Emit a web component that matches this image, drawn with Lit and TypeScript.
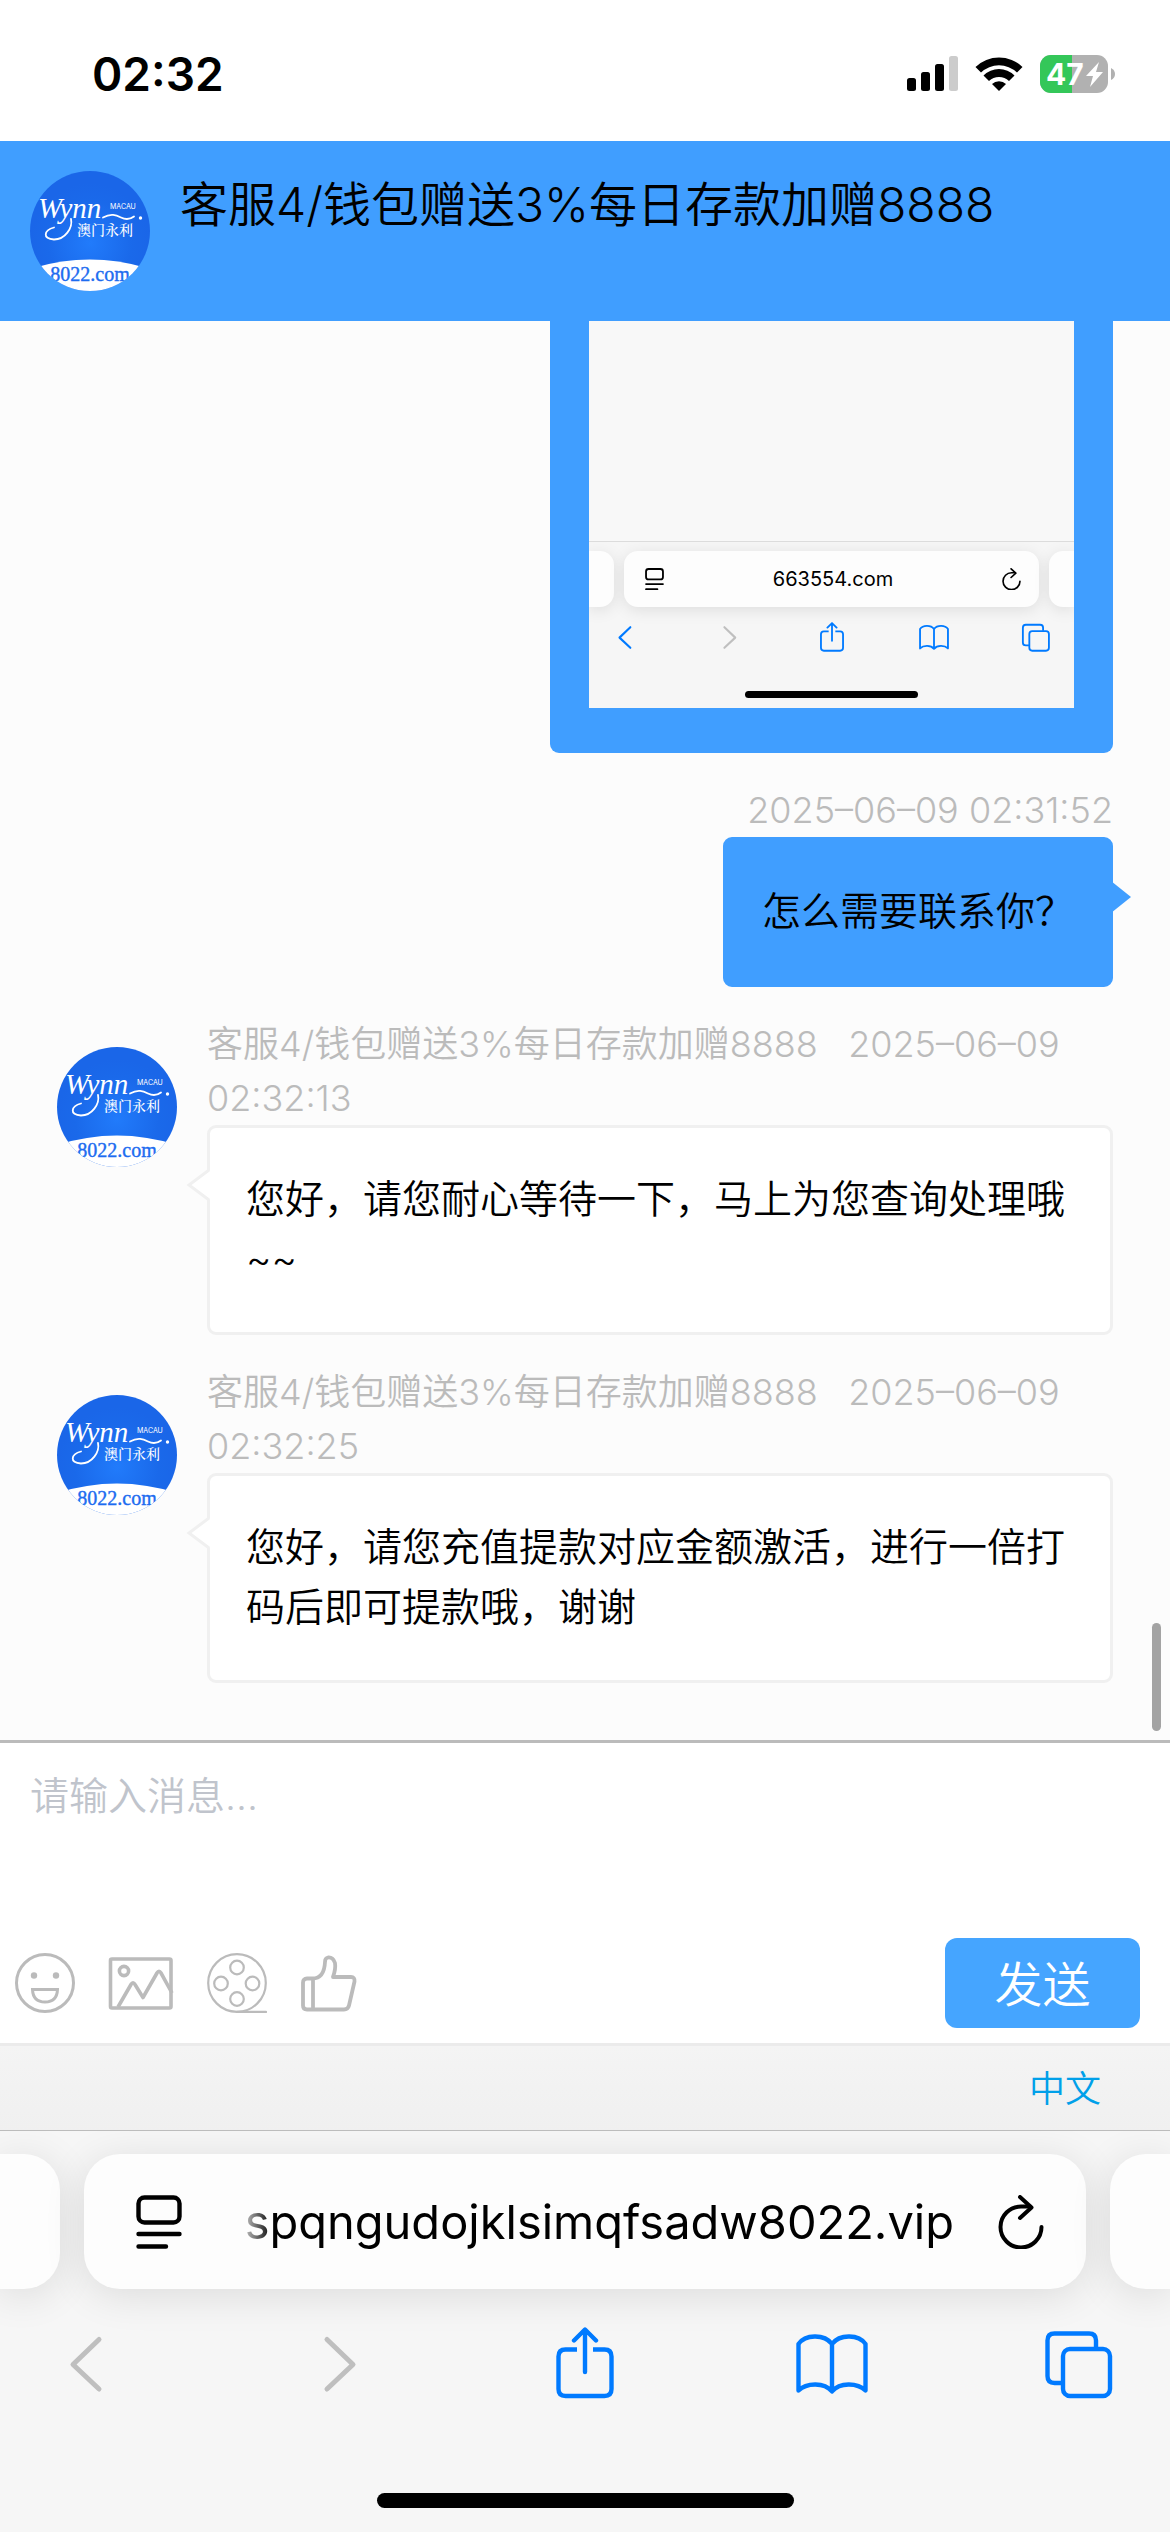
import { LitElement, html, css, svg, nothing } from "lit";
import { customElement, property } from "lit/decorators.js";

const NAME = "客服4/钱包赠送3%每日存款加赠8888";

/* ---------- icons ---------- */

const readerIcon = html`<svg viewBox="0 0 46 54" fill="none" stroke="currentColor" stroke-width="4.4" stroke-linecap="round">
  <rect x="2.5" y="2.5" width="41" height="25" rx="6"></rect>
  <path d="M2.5 39H43.5M2.5 51.5H30"></path>
</svg>`;

const reloadIcon = html`<svg viewBox="0 0 46 54" fill="none" stroke="currentColor" stroke-width="4" stroke-linecap="round" stroke-linejoin="round">
  <path d="M43.5 32A20.5 20.5 0 1 1 23 11.500H32"></path>
  <path d="M22 2L33.500 12.500L22 23"></path>
</svg>`;

const backIcon = html`<svg viewBox="0 0 72 72" fill="none" stroke="currentColor" stroke-width="5" stroke-linecap="round" stroke-linejoin="round">
  <path d="M44 12.500L18 37.500L44 62"></path>
</svg>`;

const forwardIcon = html`<svg viewBox="0 0 72 72" fill="none" stroke="currentColor" stroke-width="5" stroke-linecap="round" stroke-linejoin="round">
  <path d="M25 12.500L51 37.500L25 62"></path>
</svg>`;

const shareIcon = html`<svg viewBox="0 0 72 72" fill="none" stroke="currentColor" stroke-width="4.400" stroke-linecap="round" stroke-linejoin="round">
  <path stroke-linecap="butt" d="M28 22.500H16.500Q9.500 22.500 9.500 29.500V62Q9.500 69 16.500 69H55.500Q62.500 69 62.500 62V29.500Q62.500 22.500 55.500 22.500H44"></path>
  <path d="M36 45V3M25 13.500L36 2.500L47 13.500"></path>
</svg>`;

const bookIcon = html`<svg viewBox="0 0 72 72" fill="none" stroke="currentColor" stroke-width="4.400" stroke-linejoin="round">
  <path d="M36 17C28 6.500 9 7.500 2.500 17V63.500C10 56 28 54.500 36 64.500C44 54.500 62 56 69.500 63.500V17C63 7.500 44 6.500 36 17ZM36 17V64"></path>
</svg>`;

const tabsIcon = html`<svg viewBox="0 0 72 72" fill="none" stroke="currentColor" stroke-width="4.400" stroke-linejoin="round">
  <rect x="20" y="22" width="47" height="47" rx="7"></rect>
  <path d="M53 21V13.500Q53 6.500 46 6.500H11.500Q4.500 6.500 4.500 13.500V49Q4.500 56 11.500 56H19"></path>
</svg>`;

const smileIcon = html`<svg class="tool" viewBox="0 0 60 60" fill="none" stroke="currentColor" stroke-width="3">
  <circle cx="30" cy="30" r="28.500"></circle>
  <circle cx="19" cy="22.500" r="3.200" fill="currentColor" stroke="none"></circle>
  <circle cx="41" cy="22.500" r="3.200" fill="currentColor" stroke="none"></circle>
  <path d="M17.500 36.500H42.500Q42 49 30 49Q18 49 17.500 36.500Z"></path>
</svg>`;

const imageIcon = html`<svg class="tool wide" viewBox="0 0 66 60" fill="none" stroke="currentColor" stroke-width="3.600" stroke-linejoin="round">
  <rect x="2.500" y="6" width="60.500" height="49" rx="1.500"></rect>
  <circle cx="16" cy="18" r="4.600"></circle>
  <path d="M10 54L23 31.500Q25 28 27 31.500L35 44.500L49 20Q51 16.500 53 20L64 40"></path>
</svg>`;

const filmIcon = html`<svg class="tool" viewBox="0 0 60 60" fill="none" stroke="currentColor" stroke-width="2.200">
  <circle cx="30" cy="30" r="28.800"></circle>
  <circle cx="30" cy="14.500" r="6.800"></circle>
  <circle cx="14" cy="30.500" r="6.800"></circle>
  <circle cx="45.500" cy="30.500" r="6.800"></circle>
  <circle cx="30" cy="46" r="6.800"></circle>
  <path stroke-linecap="round" d="M30 58.900H59"></path>
</svg>`;

const thumbIcon = html`<svg class="tool" viewBox="0 0 60 60" fill="none" stroke="currentColor" stroke-width="3.800" stroke-linejoin="round">
  <path d="M12.500 25.500H7Q3 25.500 3 29.500V52.500Q3 56.500 7 56.500H44Q48 56.500 49 52.500L54.500 28.500Q55 24 51 24H33C35.500 17 35.500 13 35 10Q33 4 28 4.500Q25 5 25 9C24.500 20 20 25.500 12.500 25.500Z"></path>
  <path d="M13 26V56"></path>
</svg>`;

/* ---------- brand avatar ---------- */

@customElement("brand-avatar")
export class BrandAvatar extends LitElement {
  static styles = css`
    :host {
      display: block;
      flex: none;
      width: 120px;
      height: 120px;
      border-radius: 50%;
      overflow: hidden;
    }
    svg {
      display: block;
      width: 100%;
      height: 100%;
    }
    .script {
      font: italic 29px "Liberation Serif", serif;
      fill: #fff;
    }
    .place {
      font: 7px Inter, sans-serif;
      fill: #fff;
    }
    .cn {
      font: 500 14px "Noto Serif CJK SC", "Noto Sans CJK SC", serif;
      fill: #fff;
    }
    .site {
      font: 20px "Liberation Serif", serif;
      fill: #1d6cf0;
      stroke: #1d6cf0;
      stroke-width: 0.4px;
      text-anchor: middle;
    }
  `;

  render() {
    return html`<svg viewBox="0 0 120 120" role="img" aria-label="Wynn Macau">
      <defs>
        <radialGradient id="glow" cx="50%" cy="60%" r="50%">
          <stop offset="0" stop-color="#217bfb"></stop>
          <stop offset="0.700" stop-color="#1a69ea"></stop>
          <stop offset="1" stop-color="#1a66e8"></stop>
        </radialGradient>
      </defs>
      <rect width="120" height="120" fill="url(#glow)"></rect>
      <text class="script" x="8" y="47">Wynn</text>
      <g fill="none" stroke="#fff" stroke-width="1.800" stroke-linecap="round">
        <path d="M41 48C43 57 35 68.500 24 68.500C12 68 14 59 24 56.500"></path>
        <path d="M73 46.500C81 42 86 44 91 46.500S100 48.500 104 45.500"></path>
      </g>
      <circle cx="110.500" cy="47" r="1.700" fill="#fff"></circle>
      <text class="place" x="80" y="38">MACAU</text>
      <text class="cn" x="47" y="64">澳门永利</text>
      <path d="M0 98Q60 79 120 98V120H0Z" fill="#fff"></path>
      <text class="site" x="60" y="110">8022.com</text>
    </svg>`;
  }
}

/* ---------- browser chrome (full size and thumbnail) ---------- */

@customElement("browser-bar")
export class BrowserBar extends LitElement {
  @property() address = "";
  @property({ type: Boolean }) mini = false;
  @property({ type: Boolean }) canGoBack = false;

  static styles = css`
    :host {
      display: block;
      font-family: Inter, "Noto Sans CJK SC", sans-serif;
      background: #f6f6f6;
      border-top: 1px solid #bcbcbc;
      overflow: hidden;
      --side: 60px;
      --bar: 135px;
      --gap: 24px;
      --round: 36px;
      --icon: 72px;
      --glyph: 46px;
    }
    :host([mini]) {
      border-top-color: #dcdcdc;
      --side: 25px;
      --bar: 56px;
      --gap: 10px;
      --round: 14px;
      --icon: 30px;
      --glyph: 19px;
    }
    * {
      box-sizing: border-box;
    }
    svg {
      display: block;
      width: 100%;
      height: 100%;
    }
    button {
      padding: 0;
      border: 0;
      background: none;
      color: #007aff;
    }
    button:disabled {
      color: #bfbfbf;
    }
    .addresses {
      display: flex;
      gap: var(--gap);
      padding-top: 23px;
    }
    .card {
      height: var(--bar);
      background: #fdfdfd;
      border-radius: var(--round);
      box-shadow: 0 6px 42px rgba(0, 0, 0, 0.11);
    }
    .side {
      flex: none;
      width: var(--side);
    }
    .side.left {
      border-top-left-radius: 0;
      border-bottom-left-radius: 0;
    }
    .side.right {
      border-top-right-radius: 0;
      border-bottom-right-radius: 0;
    }
    .main {
      flex: 1;
      min-width: 0;
      display: flex;
      align-items: center;
      padding: 0 42px 0 52px;
    }
    .glyph {
      flex: none;
      width: var(--glyph);
      color: #000;
    }
    .main input {
      flex: 1;
      min-width: 0;
      height: 72px;
      margin: 0 44px 0 18px;
      padding: 0;
      border: 0;
      outline: 0;
      background: none;
      color: #000;
      font: 47px Inter, sans-serif;
      text-align: right;
      -webkit-mask-image: linear-gradient(90deg, transparent 36px, #000 72px);
      mask-image: linear-gradient(90deg, transparent 36px, #000 72px);
    }
    .actions {
      display: flex;
      justify-content: space-between;
      padding: 38px 55px 0;
    }
    .actions button {
      width: var(--icon);
      height: var(--icon);
    }
    .home {
      width: 417px;
      height: 15px;
      margin: 94px auto 24px;
      border-radius: 8px;
      background: #000;
    }
    :host([mini]) .addresses {
      padding-top: 9px;
    }
    :host([mini]) .card {
      box-shadow: 0 3px 16px rgba(0, 0, 0, 0.1);
    }
    :host([mini]) .main {
      padding: 0 18px 0 21px;
    }
    :host([mini]) .main input {
      height: 30px;
      margin: 0;
      font-size: 20px;
      text-align: center;
      -webkit-mask-image: none;
      mask-image: none;
    }
    :host([mini]) .actions {
      padding: 15px 23px 0;
    }
    :host([mini]) .home {
      width: 173px;
      height: 7px;
      margin: 39px auto 10px;
    }
  `;

  render() {
    return html`
      <div class="addresses">
        <div class="card side left"></div>
        <div class="card main">
          <button class="glyph" aria-label="页面设置">${readerIcon}</button>
          <input type="text" aria-label="地址" readonly .value=${this.address} />
          <button class="glyph" aria-label="刷新">${reloadIcon}</button>
        </div>
        <div class="card side right"></div>
      </div>
      <div class="actions">
        <button aria-label="后退" ?disabled=${!this.canGoBack}>${backIcon}</button>
        <button aria-label="前进" disabled>${forwardIcon}</button>
        <button aria-label="分享">${shareIcon}</button>
        <button aria-label="书签">${bookIcon}</button>
        <button aria-label="标签页">${tabsIcon}</button>
      </div>
      <div class="home"></div>
    `;
  }
}

/* ---------- chat message ---------- */

@customElement("chat-message")
export class ChatMessage extends LitElement {
  @property() text = "";
  @property() stamp = "";
  @property() sender = "";

  static styles = css`
    :host {
      display: flex;
      gap: 30px;
      padding-left: 57px;
    }
    :host([own]) {
      justify-content: flex-end;
    }
    brand-avatar {
      margin-top: 30px;
    }
    .body {
      flex: 1;
      min-width: 0;
    }
    :host([own]) .body {
      flex: none;
    }
    .meta {
      font-size: 36px;
      line-height: 54px;
      color: #bbb;
    }
    :host([own]) .meta {
      text-align: right;
    }
    .bubble {
      position: relative;
      box-sizing: border-box;
      padding: 41px 36px 43px;
      border: 3px solid #f0f0f0;
      border-radius: 9px;
      background: #fff;
      color: #000;
      font-size: 39px;
      line-height: 60px;
    }
    :host([own]) .bubble {
      width: fit-content;
      margin-left: auto;
      border-color: #409eff;
      background: #409eff;
    }
    .tail {
      position: absolute;
      top: 41px;
      left: -24px;
      width: 24px;
      height: 32px;
    }
    :host([own]) .tail {
      left: auto;
      right: -21px;
    }
  `;

  render() {
    const own = !this.sender;
    const meta = own ? this.stamp : `${this.sender}\u00a0\u00a0 ${this.stamp}`;
    return html`
      ${own ? nothing : html`<brand-avatar></brand-avatar>`}
      <div class="body">
        <div class="meta">${meta}</div>
        <div class="bubble">
          ${own
            ? html`<svg class="tail" viewBox="0 0 24 32"><path d="M4 0L24 16L4 32Z" fill="#409eff"></path></svg>`
            : html`<svg class="tail" viewBox="0 0 24 32">
                <path d="M24 1.500V30.500L2.500 16Z" fill="#fff"></path>
                <path d="M23 1L3 16L23 31" fill="none" stroke="#f0f0f0" stroke-width="3"></path>
              </svg>`}
          ${this.text}
        </div>
      </div>
    `;
  }
}

/* ---------- page ---------- */

@customElement("app-root")
export class AppRoot extends LitElement {
  static styles = css`
    :host {
      display: flex;
      flex-direction: column;
      min-height: 100vh;
      background: #fff;
      color: #000;
      font-family: Inter, "Noto Sans CJK SC", sans-serif;
      font-weight: 350;
    }
    * {
      box-sizing: border-box;
    }
    button {
      padding: 0;
      border: 0;
      background: none;
      font: inherit;
    }
    .status {
      display: flex;
      justify-content: space-between;
      align-items: center;
      height: 141px;
      padding: 6px 54px 0 92px;
    }
    .clock {
      font-size: 46px;
      font-weight: 600;
      line-height: 60px;
    }
    .signals {
      display: block;
      width: 210px;
      height: 40px;
    }
    .level {
      font: 700 30px Inter, sans-serif;
      fill: #fff;
    }
    .header {
      display: flex;
      gap: 30px;
      height: 180px;
      padding: 30px;
      background: #409eff;
    }
    .header h1 {
      margin: 0;
      font-size: 48px;
      font-weight: inherit;
      line-height: 68px;
    }
    .chat {
      position: relative;
      flex: 1;
      display: flex;
      flex-direction: column;
      gap: 30px;
      padding: 0 57px 57px 0;
      background: #fcfcfc;
    }
    .shot {
      align-self: flex-end;
      padding: 0 39px 45px;
      border-radius: 0 0 9px 9px;
      background: #409eff;
    }
    .picture {
      display: flex;
      flex-direction: column;
      justify-content: flex-end;
      width: 485px;
      height: 387px;
      background: #f8f8f8;
    }
    .thumb {
      position: absolute;
      right: 9px;
      bottom: 9px;
      width: 9px;
      height: 108px;
      border-radius: 5px;
      background: #a3a3a3;
    }
    .compose {
      display: flex;
      flex-direction: column;
      border-top: 3px solid #bbb;
      border-bottom: 3px solid #ebebeb;
    }
    .compose textarea {
      display: block;
      height: 183px;
      padding: 23px 30px;
      border: 0;
      outline: 0;
      resize: none;
      background: #fff;
      font: inherit;
      font-size: 39px;
      line-height: 60px;
    }
    .compose textarea::placeholder {
      color: #c0c4cc;
    }
    .tools {
      display: flex;
      align-items: center;
      gap: 33px;
      padding: 12px 30px 15px 15px;
    }
    .tools button {
      color: #bbb;
    }
    .tool {
      display: block;
      width: 60px;
      height: 60px;
    }
    .tool.wide {
      width: 66px;
    }
    .tools .send {
      width: 195px;
      height: 90px;
      margin-left: auto;
      padding-bottom: 4px;
      border-radius: 12px;
      background: #45a5ff;
      color: #fff;
      font-size: 48px;
    }
    .language {
      display: flex;
      justify-content: flex-end;
      align-items: center;
      height: 84px;
      padding: 0 69px 4px 0;
      background: linear-gradient(#f4f4f4, #f0f0f0);
    }
    .language button {
      color: #00a0e9;
      font-size: 36px;
    }
  `;

  private signals() {
    const bars = [24, 18, 10, 2];
    return html`<svg class="signals" viewBox="0 0 210 40" role="img" aria-label="信号、无线网络、电量">
      ${bars.map(
        (top, i) =>
          svg`<rect x=${1 + i * 14} y=${top} width="9" height=${37 - top} rx="2.500" fill=${i === 3 ? "#ccc" : "#000"}></rect>`
      )}
      <path d="M69.500 13A34 34 0 0 1 116.500 13L111 18.500A26 26 0 0 0 75 18.500Z"></path>
      <path d="M77.500 21.500A22 22 0 0 1 108.500 21.500L103 27A14.500 14.500 0 0 0 83 27Z"></path>
      <path d="M86 30A10 10 0 0 1 100 30L93 37Z"></path>
      <clipPath id="cell"><rect x="134" y="1" width="68" height="38" rx="11"></rect></clipPath>
      <g clip-path="url(#cell)">
        <rect x="134" y="1" width="68" height="38" fill="#b1b1b1"></rect>
        <rect x="134" y="1" width="32" height="38" fill="#34c759"></rect>
      </g>
      <path d="M205 14Q209 16 209 20T205 26Z" fill="#b1b1b1"></path>
      <text class="level" x="140" y="31">47</text>
      <path d="M193 8L180 22H187L184 33L197 18H190Z" fill="#fff"></path>
    </svg>`;
  }

  render() {
    return html`
      <div class="status"><span class="clock">02:32</span>${this.signals()}</div>
      <header class="header">
        <brand-avatar></brand-avatar>
        <h1>${NAME}</h1>
      </header>
      <main class="chat">
        <div class="shot">
          <div class="picture">
            <browser-bar mini canGoBack address="663554.com"></browser-bar>
          </div>
        </div>
        <chat-message own stamp="2025–06–09 02:31:52" text="怎么需要联系你？"></chat-message>
        <chat-message sender=${NAME} stamp="2025–06–09 02:32:13" text="您好，请您耐心等待一下，马上为您查询处理哦~~"></chat-message>
        <chat-message sender=${NAME} stamp="2025–06–09 02:32:25" text="您好，请您充值提款对应金额激活，进行一倍打码后即可提款哦，谢谢"></chat-message>
        <div class="thumb"></div>
      </main>
      <section class="compose">
        <textarea aria-label="消息" placeholder="请输入消息..."></textarea>
        <div class="tools">
          <button aria-label="表情">${smileIcon}</button>
          <button aria-label="图片">${imageIcon}</button>
          <button aria-label="视频">${filmIcon}</button>
          <button aria-label="评价">${thumbIcon}</button>
          <button class="send">发送</button>
        </div>
      </section>
      <div class="language"><button>中文</button></div>
      <browser-bar address="spqngudojklsimqfsadw8022.vip"></browser-bar>
    `;
  }
}
